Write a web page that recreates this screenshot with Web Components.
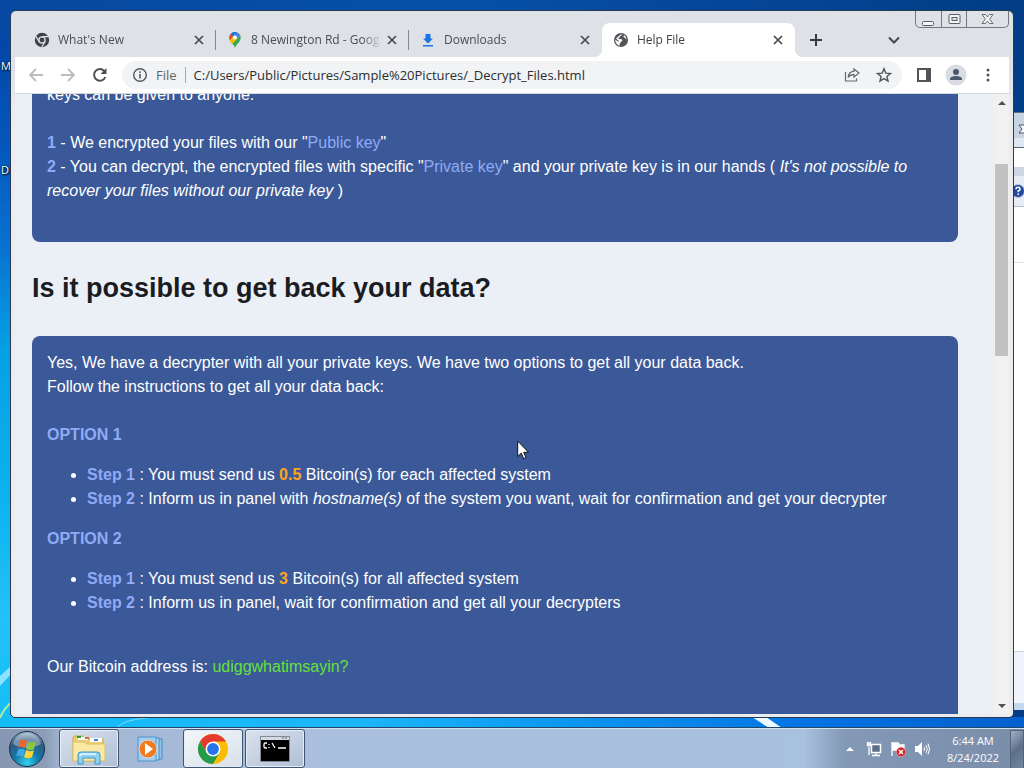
<!DOCTYPE html>
<html lang="en">
<head>
<meta charset="utf-8">
<title>Desktop</title>
<style>
html,body{margin:0;height:100%;overflow:hidden}
body{font-family:"Open Sans","Noto Sans",sans-serif;font-size:12px}
</style>
</head>
<body>
<win-desktop>
  <desktop-label style="top:58px">M</desktop-label>
  <desktop-label style="top:162px">D</desktop-label>
  <back-window></back-window>
  <browser-window>
    <browser-tab slot="tabs" icon="chrome" label="What's New"></browser-tab>
    <browser-tab slot="tabs" icon="maps" label="8 Newington Rd - Goog"></browser-tab>
    <browser-tab slot="tabs" icon="download" label="Downloads"></browser-tab>
    <browser-tab slot="tabs" icon="globe" label="Help File" active></browser-tab>
    <help-page></help-page>
  </browser-window>
  <mouse-cursor></mouse-cursor>
  <task-bar slot="bar"></task-bar>
</win-desktop>
<script>
const define=(name,html,setup)=>{
  const t=document.createElement('template');t.innerHTML=html;
  customElements.define(name,class extends HTMLElement{
    constructor(){super();this.attachShadow({mode:'open'}).append(t.content.cloneNode(true));}
    connectedCallback(){if(setup)setup(this,this.shadowRoot);}
  });
};
const reset='*{box-sizing:border-box}button{appearance:none;border:0;background:none;padding:0;margin:0;font:inherit;color:inherit;display:grid;place-items:center}svg{display:block}';

const icons={
chrome:'<svg width="16" height="16" viewBox="0 0 16 16"><circle cx="8" cy="8" r="7.2" fill="#3f4347"/><circle cx="8" cy="8" r="3.1" fill="#3f4347" stroke="#dee1e6" stroke-width="1.3"/><path d="M8 4.6h6.4M5 9.6 1.9 4.3M11 9.6 7.8 15" stroke="#dee1e6" stroke-width="1.2" fill="none"/></svg>',
maps:'<svg width="16" height="16" viewBox="0 0 16 16"><path d="M8 16C7.3 12.400 2.300 10 2.300 5.700A5.700 5.700 0 0 1 13.700 5.700C13.700 10 8.700 12.400 8 16Z" fill="#34a853"/><path d="M2.700 8 9.800 0.300A5.700 5.700 0 0 1 13.200 3.400L5 12.200C4 11 3 9.800 2.700 8Z" fill="#fbbc04"/><path d="M2.300 5.700A5.700 5.700 0 0 1 3.700 1.900L6.300 4.200 2.700 8Z" fill="#ea4335"/><path d="M3.700 1.900A5.700 5.700 0 0 1 9.800 0.300L6.300 4.200Z" fill="#1a73e8"/><path d="M9.800 0.300A5.700 5.700 0 0 1 13.200 3.400L9.800 6.900 7 3.500Z" fill="#4285f4"/><circle cx="8" cy="5.600" r="2" fill="#fff"/></svg>',
download:'<svg width="16" height="16" viewBox="0 0 16 16"><path d="M5.500 2h5v4.500H13L8 11.500 3 6.500h2.500zM3 13h10v1.500H3z" fill="#1a73e8"/></svg>',
globe:'<svg width="16" height="16" viewBox="0 0 16 16"><circle cx="8" cy="8" r="7" fill="#505459"/><path d="M8.600 1.800 8.600 3C8.600 4 6.800 3.800 6.800 4.800 6.800 6 5.300 5.500 5.300 6.500 5.300 7.400 8.600 6.600 9.200 7.600 9.800 8.700 9 9.300 8.200 9.600 7.600 10 8 10.700 7.200 11 6.300 11.300 6.500 12.500 7 13.700A5.800 5.800 0 0 1 2.300 7.500L5.500 10 5.600 8.800 3 6.400M11 3.100 C10 4.500 10.500 5.300 11.500 5.600 12.300 5.900 12 7 13.600 7.300A6 6 0 0 0 11 3.100Z" fill="#fff"/></svg>'
};

define('desktop-label',`<style>:host{position:absolute;left:1px;color:#fff;font-size:11px;line-height:15px;text-shadow:1px 1px 2px #000,0 0 2px #000}</style><slot></slot>`);

define('win-desktop',`<style>
:host{display:grid;grid-template-rows:1fr 40px;height:100vh;overflow:hidden}
.desk{position:relative;overflow:hidden;background:
 linear-gradient(90deg,#14bcf6 0,#1cb6f8 35%,#0a90ee 60%,#0372e2 80%,#0560cc 100%) bottom/100% 11px no-repeat,
 linear-gradient(180deg,#0748a0 0,#0348a8 50px,#0558be 150px,#0774d2 250px,#06a0e4 350px,#0cb0ee 480px,#22c2f8 620px,#14bcf6 100%) left/12px 100% no-repeat,
 linear-gradient(90deg,#0648a0 0,#0750a8 45%,#044596 75%,#023d85 100%)}
.ray{position:absolute;bottom:0;left:0;width:100%;height:140px}
</style>
<div class="desk">
<svg class="ray" preserveAspectRatio="none" viewBox="0 0 1024 140"><path d="M752 129h14l16 11h-13z" fill="#eefaff"/><path d="M0 130Q4 120 12 114" stroke="#b4ee9a" stroke-width="2" fill="none"/><path d="M0 88 12 77v8L0 98z" fill="#b9f2ff" opacity=".7"/><path d="M117 140q6-9 40-11" stroke="#7fdcff" fill="none"/></svg>
<slot></slot></div><slot name="bar"></slot>`);

define('back-window',`<style>${reset}
:host{position:absolute;right:0;top:112px;bottom:18px;width:24px;display:flex;flex-direction:column;background:#fff;border-top:1px solid #5d6f85;font-size:12px}
div{flex:none;display:flex;justify-content:flex-end}
.cap{height:25px;background:#c6d3e2}.cap svg{margin-top:11px}
.gap{height:9px;background:#dfe7f0}.addr{height:20px;background:#fff;border-top:1px solid #5a6572}
.band{height:9px;background:#ccd6e4}.help{height:31px;background:#e6edf6;border-bottom:1px solid #b4c0ce;align-items:center}
.line{height:56px;border-bottom:1px solid #dde2e8}.space{flex:1}
.foot{height:52px;background:#f1f5fb;border-top:1px solid #ccd5e0}.end{height:7px;background:#c3d8ef}
</style>
<div class="cap"><svg width="6" height="10" viewBox="0 0 6 10"><path d="M7 1H1l3 4-3 4h6" fill="#f7f9fb" stroke="#4c5668"/></svg></div>
<div class="gap"></div><div class="addr"></div><div class="band"></div>
<div class="help"><svg width="11" height="16" viewBox="0 0 11 16"><circle cx="5" cy="8" r="6.500" fill="#234a9e" stroke="#b9c6df"/><path d="M3 6.300Q3 4.300 5 4.300T7 6.200Q7 7.300 5.200 8v1.300M5.200 10.500v1.500" stroke="#fff" stroke-width="1.500" fill="none"/></svg></div>
<div class="line"></div><div class="space"></div><div class="foot"></div><div class="end"></div>`);

define('browser-tab',`<style>${reset}
:host{display:flex;flex:0 1 193px;min-width:0;height:34px;align-items:center;gap:8px;padding:0 9px 0 11px;position:relative;color:#4a4e53}
:host(:not([active]))::after{content:"";position:absolute;right:0;top:7px;width:1px;height:20px;background:#85898f}
:host(.last)::after{display:none}
:host([active]){background:#fff;border-radius:8px 8px 0 0;color:#3c4043}
:host([active])::before{content:"";position:absolute;left:-8px;right:-8px;bottom:0;height:8px;background:radial-gradient(circle at 0 0,transparent 8px,#fff 8px) left/8px 8px no-repeat,radial-gradient(circle at 100% 0,transparent 8px,#fff 8px) right/8px 8px no-repeat}
.icon{width:16px;flex:none}
.label{flex:1;margin-right:-6px;overflow:hidden;white-space:nowrap;line-height:18px;-webkit-mask:linear-gradient(90deg,#000 calc(100% - 20px),transparent)}
button{width:16px;height:16px;flex:none}
</style><span class="icon"></span><span class="label"></span>
<button aria-label="Close tab"><svg width="10" height="10" viewBox="0 0 10 10"><path d="m1 1 8 8M9 1 1 9" stroke="#45494d" stroke-width="1.700"/></svg></button>`,
(host,root)=>{root.querySelector('.icon').innerHTML=icons[host.getAttribute('icon')];root.querySelector('.label').textContent=host.getAttribute('label');
 const n=host.nextElementSibling;if(n&&n.hasAttribute('active'))host.classList.add('last');});

define('caption-buttons',`<style>${reset}
:host{display:flex;height:17px;border:1px solid #74787d;border-top:0;border-radius:0 0 5px 5px}
button{width:25px}button+button{border-left:1px solid #74787d}button:last-child{width:42px}
</style>
<button aria-label="Minimize"><svg width="13" height="13" viewBox="0 0 13 13"><rect x=".5" y="8.500" width="11" height="4" rx="1" fill="#f4f5f7" stroke="#5a5e64"/></svg></button>
<button aria-label="Maximize"><svg width="13" height="11" viewBox="0 0 13 11"><rect x="1" y=".5" width="11" height="9" rx="1" fill="#f4f5f7" stroke="#5a5e64"/><rect x="4" y="3.500" width="5" height="3" fill="#dee1e6" stroke="#5a5e64"/></svg></button>
<button aria-label="Close"><svg width="13" height="11" viewBox="0 0 13 11"><path d="M1 .5h3.500l2 2.500 2-2.500H12L8.600 5 12 9.500H8.500L6.500 7l-2 2.500H1L4.400 5z" fill="#f4f5f7" stroke="#6a6e74"/></svg></button>`);

define('tool-bar',`<style>${reset}
:host{display:flex;align-items:center;height:37px;padding:0 5px;background:#fff;border-bottom:1px solid #d5d8dc}
button{width:32px;height:32px;flex:none}
form{display:flex;align-items:center;flex:1;min-width:0;height:28px;margin:0 6px;padding:0 2px 0 10px;border-radius:14px;background:#f1f3f4;color:#5f6368}
label{font-size:13px;margin:0 8px 0 8px}
.sep{width:1px;height:16px;background:#a3a7ab;margin-right:8px}
input{flex:1;min-width:0;border:0;padding:0;background:none;outline:0;color:#2b2e31;font:13px/18px "Open Sans","Noto Sans",sans-serif}
</style>
<button aria-label="Back"><svg width="16" height="16" viewBox="0 0 16 16"><path d="M15 8H2M8 2 2 8l6 6" fill="none" stroke="#b9bcc0" stroke-width="1.800"/></svg></button>
<button aria-label="Forward"><svg width="16" height="16" viewBox="0 0 16 16"><path d="M1 8h13M8 2l6 6-6 6" fill="none" stroke="#b9bcc0" stroke-width="1.800"/></svg></button>
<button aria-label="Reload"><svg width="16" height="16" viewBox="0 0 16 16"><path d="M13.300 10A5.800 5.800 0 1 1 12.200 4" fill="none" stroke="#4c5054" stroke-width="2"/><path d="M14.500 1v6h-6z" fill="#4c5054"/></svg></button>
<form>
<svg width="16" height="16" viewBox="0 0 16 16"><circle cx="8" cy="8" r="6.300" fill="none" stroke="#54585d" stroke-width="1.400"/><path d="M8 7v4.500M8 4.300v1.600" stroke="#54585d" stroke-width="1.600"/></svg>
<label for="url">File</label><span class="sep"></span>
<input id="url" value="C:/Users/Public/Pictures/Sample%20Pictures/_Decrypt_Files.html" spellcheck="false">
<button type="button" aria-label="Share"><svg width="16" height="16" viewBox="0 0 16 16"><path d="M1.500 5v9h11v-2.500" fill="none" stroke="#64686d" stroke-width="1.200"/><path d="M10 2l5 4-5 4V7.700C7.300 7.500 5.500 8.500 4.200 10.500 4.500 7 6.500 4.600 10 4.200z" fill="none" stroke="#64686d" stroke-width="1.200"/></svg></button>
<button type="button" aria-label="Bookmark"><svg width="16" height="16" viewBox="0 0 16 16"><path d="m8 1.700 1.800 4.400 4.700.4-3.600 3 1.100 4.600L8 11.600l-4 2.500 1.100-4.600-3.600-3 4.700-.4z" fill="none" stroke="#505459" stroke-width="1.400"/></svg></button>
</form>
<button aria-label="Side panel"><svg width="16" height="16" viewBox="0 0 16 16"><path d="M1 1h14v14H1zM3 3v10h7V3z" fill="#505459" fill-rule="evenodd"/></svg></button>
<button aria-label="Profile"><svg width="22" height="22" viewBox="0 0 22 22"><circle cx="11" cy="11" r="10.500" fill="#d9dde3"/><circle cx="11" cy="8" r="3" fill="#4a5870"/><path d="M5 16v-1c0-2 3-3 6-3s6 1 6 3v1z" fill="#4a5870"/></svg></button>
<button aria-label="Menu"><svg width="16" height="16" viewBox="0 0 16 16" fill="#505459"><circle cx="8" cy="3" r="1.500"/><circle cx="8" cy="8" r="1.500"/><circle cx="8" cy="13" r="1.500"/></svg></button>`);

define('scroll-bar',`<style>${reset}
:host{display:flex;flex-direction:column;align-items:center;width:15px;flex:none;background:#f1f1f1}
button{width:15px;height:17px;flex:none}
.track{flex:1;width:13px;display:grid;grid-template-rows:53fr 192fr 341fr}.thumb{grid-row:2;background:#c1c1c1}
</style><button aria-label="Scroll up"><svg width="8" height="4" viewBox="0 0 8 4"><path d="M0 4 4 0l4 4z" fill="#505050"/></svg></button>
<div class="track"><div class="thumb"></div></div>
<button aria-label="Scroll down"><svg width="8" height="4" viewBox="0 0 8 4"><path d="M0 0 4 4l4-4z" fill="#505050"/></svg></button>`);

define('browser-window',`<style>${reset}
:host{position:absolute;inset:10px 10px 10px 10px;display:flex;flex-direction:column;border:1px solid #263a56;border-radius:6px 6px 5px 5px;background:linear-gradient(#dee1e6 60px,#ececee 100px);padding:0 4px 3px 4px;overflow:hidden}
.strip{display:flex;height:46px;flex:none;padding-left:8px;align-items:flex-end}
.tabs{display:flex;flex:0 1 772px;min-width:0}
.new,.list{width:32px;height:34px;flex:none}.new{margin-left:5px}
.fill{flex:0 1 46px}
caption-buttons{align-self:flex-start;margin-left:auto}
.view{flex:1;min-height:0;display:flex}
</style>
<div class="strip"><div class="tabs"><slot name="tabs"></slot></div>
<button class="new" aria-label="New tab"><svg width="12" height="12" viewBox="0 0 12 12"><path d="M6 0v12M0 6h12" stroke="#36393d" stroke-width="2"/></svg></button><span class="fill"></span>
<button class="list" aria-label="Search tabs"><svg width="12" height="8" viewBox="0 0 12 8"><path d="m1 1.500 5 5 5-5" fill="none" stroke="#45494d" stroke-width="2"/></svg></button>
<caption-buttons></caption-buttons></div>
<tool-bar></tool-bar>
<div class="view"><slot></slot><scroll-bar></scroll-bar></div>`);

define('info-card',`<style>:host{display:block;background:#3b5998;color:#fff;border-radius:8px;padding:15px}</style><slot></slot>`);

define('help-page',`<style>
:host{display:block;flex:1;min-width:0;overflow:hidden;background:#ebf0f7;padding:0 36px 0 17px;box-sizing:border-box;font:16px/24px "Liberation Sans",Arial,sans-serif;color:#fff}
p{margin:0 0 24px}h2{margin:30px 0 31px;font-size:27px;line-height:33px;color:#1a1c22}
h3{margin:0;font-size:16px;line-height:24px;color:#8fabf7}
ul{margin:16px 0;padding-left:40px}b,.k{color:#8fabf7}.n{color:#ffa31a}.a{color:#66e03c}
.last{padding-top:24px;margin-bottom:120px}
</style>
<info-card><p>keys can be given to anyone.</p>
<p><b>1</b> - We encrypted your files with our "<span class="k">Public key</span>"<br><b>2</b> - You can decrypt, the encrypted files with specific "<span class="k">Private key</span>" and your private key is in our hands ( <i>It's not possible to recover your files without our private key</i> )</p></info-card>
<h2>Is it possible to get back your data?</h2>
<info-card><p>Yes, We have a decrypter with all your private keys. We have two options to get all your data back.<br>Follow the instructions to get all your data back:</p>
<h3>OPTION 1</h3>
<ul><li><b>Step 1</b> : You must send us <b class="n">0.5</b> Bitcoin(s) for each affected system</li><li><b>Step 2</b> : Inform us in panel with <i>hostname(s)</i> of the system you want, wait for confirmation and get your decrypter</li></ul>
<h3>OPTION 2</h3>
<ul><li><b>Step 1</b> : You must send us <b class="n">3</b> Bitcoin(s) for all affected system</li><li><b>Step 2</b> : Inform us in panel, wait for confirmation and get all your decrypters</li></ul>
<p class="last">Our Bitcoin address is: <span class="a">udiggwhatimsayin?</span></p></info-card>`,
host=>{requestAnimationFrame(()=>{host.scrollTop=26;});});

define('mouse-cursor',`<style>:host{position:absolute;left:517px;top:440px;pointer-events:none}svg{display:block}</style>
<svg width="12" height="20" viewBox="0 0 12 20"><path d="M.7 1v15.500l3.600-3.400 2.300 5.600 2.400-1-2.300-5.400h4.800z" fill="#fff" stroke="#111" stroke-width="1"/></svg>`);

define('task-bar',`<style>${reset}
:host{display:flex;height:40px;border-top:1px solid #d3e2f0;box-shadow:0 -1px #24466b;position:relative;background:linear-gradient(90deg,#8797b1 0,#8c9cb6 45px,#a3b6d2 62px,#a9bfdd 300px,#a8c1de calc(100% - 220px),#8399b6 calc(100% - 180px),#7a8da9 100%);color:#fff}
.start{width:54px}.apps{display:flex;gap:2px;margin-left:5px}
.apps button{width:60px;height:39px;border:1px solid transparent;border-radius:3px}
.apps .run{border-color:#3f5470;background:linear-gradient(150deg,#d9e2ee,#b1bfd5);box-shadow:inset 0 0 0 1px #e3edf7}
.apps .on{background:linear-gradient(150deg,#f4f7fa,#d8e0ea)}
.tray{display:flex;align-items:center;margin-left:auto}
.tray button{width:24px;height:32px}
.clock{text-align:center;line-height:17px;width:62px;margin:0 6px 0 8px;font-size:11px}
.tray .show{width:14px;height:39px;border:1px solid #51647d;background:linear-gradient(135deg,#a2b2c8,#5d7087 50%,#72869f)}
</style>
<button class="start" aria-label="Start"><svg width="38" height="38" viewBox="0 0 38 38"><defs><radialGradient id="o" cx=".5" cy=".9" r=".9"><stop offset="0" stop-color="#36d2ee"/><stop offset=".4" stop-color="#1478a8"/><stop offset=".75" stop-color="#34597c"/><stop offset="1" stop-color="#a9bed0"/></radialGradient></defs><circle cx="19" cy="19" r="17.500" fill="url(#o)" stroke="#17314f"/><path d="M5 14C8 5 16 3 19 3s11 2 14 11c-9 5-19 5-28 0z" fill="#dcebf5" opacity=".4"/><path d="M12 11c3-2 5-1 7 0l-2 7c-2-1-5-2-7 0z" fill="#ee652c"/><path d="M20 12c3 1 5 1 8-1l-2 8c-3 2-5 1-8 0z" fill="#8cc63f"/><path d="M10 20c2-2 5-1 7 0l-2 7c-2-1-5-2-7 0z" fill="#3fa9e8"/><path d="M18 20c3 1 5 2 8 0l-2 7c-3 2-6 1-8 0z" fill="#ffd53d"/></svg></button>
<div class="apps">
<button class="run" aria-label="Explorer"><svg width="36" height="32" viewBox="0 0 36 32"><path d="M2 5q0-2 2-2h8l2 3h18v22H2z" fill="#efd06b" stroke="#c9a94e"/><path d="M7 4h10v3H7zM19 5h12v4H19z" fill="#fff"/><path d="M6 3h4v2H6z" fill="#2d9e3d"/><path d="M14 4h4v2h-4z" fill="#d66a2c"/><path d="M23 6h4v2h-4z" fill="#3682d9"/><path d="M2 9h11l3 2h18v17H2z" fill="#fae9a5" stroke="#d8c274"/><path d="M7 31V22q0-3 3-3h16q3 0 3 3v9h-5v-6H12v6z" fill="#8dd2f0" stroke="#3d94c5"/><path d="M9 23q0-2 3-2h13" stroke="#e7faff" stroke-width="1.500" fill="none"/></svg></button>
<button aria-label="Media Player"><svg width="30" height="28" viewBox="0 0 30 28"><path d="M8 4h18v20H8z" fill="#8ec3e8" stroke="#4b8cc3"/><path d="M5 3h18v22H5z" fill="#b1daf3" stroke="#4b8cc3"/><path d="M2 2h18v24H2z" fill="#a5cdee" stroke="#4b93ca"/><circle cx="12" cy="14" r="9" fill="#f17c20" stroke="#d5d9e0"/><path d="m9 8 8 6-8 6z" fill="#fff"/></svg></button>
<button class="run on" aria-label="Chrome"><svg width="32" height="32" viewBox="0 0 32 32"><circle cx="16" cy="16" r="15" fill="#fbbc04"/><path d="M3 8.500A15 15 0 0 1 29 8.500H16L9.500 19.700z" fill="#e33b2e"/><path d="M3 8.500A15 15 0 0 0 16 31L22.500 19.800 9.500 19.700z" fill="#229c4b"/><circle cx="16" cy="16" r="7.500" fill="#fff"/><circle cx="16" cy="16" r="5.900" fill="#2674e8"/></svg></button>
<button class="run" aria-label="Command Prompt"><svg width="30" height="26" viewBox="0 0 30 26"><path d="M.5.5h29v25H.5z" fill="#000" stroke="#848b95"/><path d="M1 1h28v3H1z" fill="#d4dae1"/><path d="M22 2h2M25 2h2" stroke="#586577"/><path d="M7 7H5L4 8v3l1 1h2M9 8v1M9 11v1M12 7l3 5M18 12h8" stroke="#fff" stroke-width="1.300" fill="none"/></svg></button>
</div>
<div class="tray">
<button aria-label="Show hidden icons"><svg width="8" height="4" viewBox="0 0 8 4"><path d="M0 4 4 0l4 4z" fill="#fff"/></svg></button>
<button aria-label="Network"><svg width="16" height="16" viewBox="0 0 16 16"><path d="M5.500 3.500h9v8h-9z" fill="#5b7088" stroke="#fff" stroke-width="1.500"/><path d="M10 12v2M6 14.500h8M3 6v8M1.500 1v3.500h3V1M3 1v4" stroke="#fff" stroke-width="1.300" fill="none"/></svg></button>
<button aria-label="Action Center"><svg width="16" height="16" viewBox="0 0 16 16"><path d="M2 1v14M3 2h5l2 2h4v7H9L7 9H3z" fill="#fff" stroke="#fff" stroke-width="1.300"/><circle cx="11" cy="11" r="4.700" fill="#cf2127" stroke="#f2b6b6" stroke-width=".6"/><path d="m9 9 4 4M13 9l-4 4" stroke="#fff" stroke-width="1.500"/></svg></button>
<button aria-label="Volume"><svg width="16" height="16" viewBox="0 0 16 16"><path d="M1 5h3l4-4v14l-4-4H1z" fill="#fff"/><path d="M10 6q1 2 0 4M12 4q2.500 4 0 8M14 2.500q3 5.500 0 11" stroke="#fff" fill="none"/></svg></button>
<div class="clock">6:44 AM<br>8/24/2022</div>
<button class="show" aria-label="Show desktop"></button>
</div>`);
</script>
</body>
</html>
